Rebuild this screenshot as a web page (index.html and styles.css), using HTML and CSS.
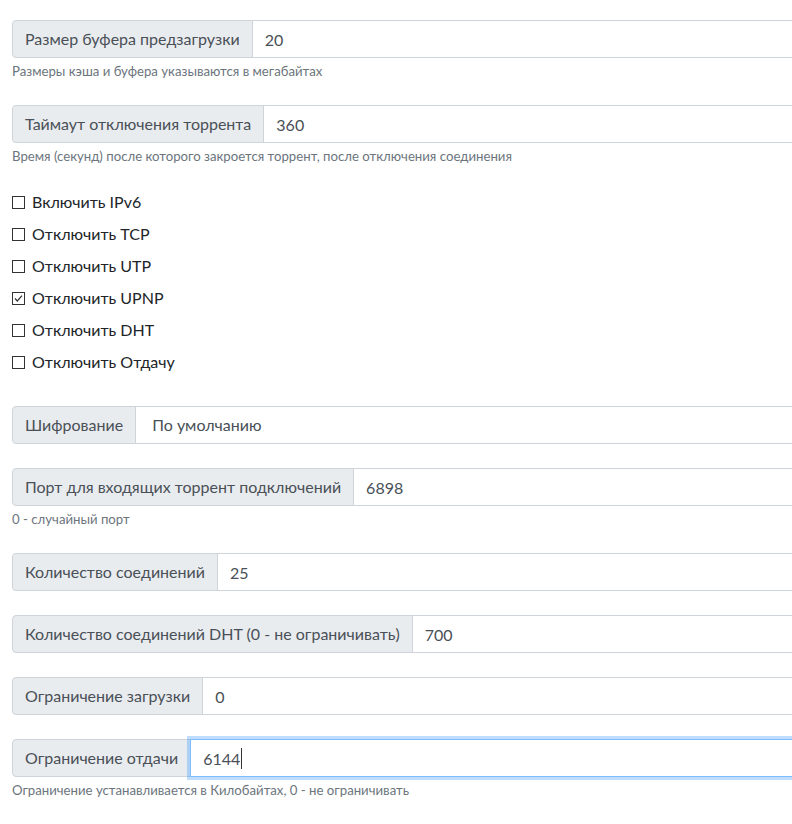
FILE: index.html
```html
<!DOCTYPE html>
<html lang="ru">
<head>
    <meta charset="UTF-8">
    <meta name="viewport" content="width=device-width, initial-scale=1.0">
    <title>Настройки</title>
    <link rel="stylesheet" href="styles.css">
</head>
<body>
    <form class="settings">
        <div class="form-group">
            <div class="input-group">
                <span class="input-label">Размер буфера предзагрузки</span>
                <input type="text" class="form-control" value="20">
            </div>
            <small class="form-text">Размеры кэша и буфера указываются в мегабайтах</small>
        </div>

        <div class="form-group">
            <div class="input-group">
                <span class="input-label">Таймаут отключения торрента</span>
                <input type="text" class="form-control" value="360">
            </div>
            <small class="form-text">Время (секунд) после которого закроется торрент, после отключения соединения</small>
        </div>

        <div class="checks">
            <label class="form-check"><input type="checkbox"><span class="box"></span>Включить IPv6</label>
            <label class="form-check"><input type="checkbox"><span class="box"></span>Отключить TCP</label>
            <label class="form-check"><input type="checkbox"><span class="box"></span>Отключить UTP</label>
            <label class="form-check"><input type="checkbox" checked><span class="box"><svg viewBox="0 0 11 11" width="11" height="11"><path d="M2 5.5 L4.3 8 L9 2.6" fill="none" stroke="#333" stroke-width="1.2"/></svg></span>Отключить UPNP</label>
            <label class="form-check"><input type="checkbox"><span class="box"></span>Отключить DHT</label>
            <label class="form-check"><input type="checkbox"><span class="box"></span>Отключить Отдачу</label>
        </div>

        <div class="form-group">
            <div class="input-group">
                <span class="input-label">Шифрование</span>
                <select class="form-control select">
                    <option selected>По умолчанию</option>
                    <option>Включено</option>
                    <option>Отключено</option>
                </select>
            </div>
        </div>

        <div class="form-group">
            <div class="input-group">
                <span class="input-label">Порт для входящих торрент подключений</span>
                <input type="text" class="form-control" value="6898">
            </div>
            <small class="form-text">0 - случайный порт</small>
        </div>

        <div class="form-group">
            <div class="input-group">
                <span class="input-label">Количество соединений</span>
                <input type="text" class="form-control" value="25">
            </div>
        </div>

        <div class="form-group">
            <div class="input-group">
                <span class="input-label">Количество соединений DHT (0 - не ограничивать)</span>
                <input type="text" class="form-control" value="700">
            </div>
        </div>

        <div class="form-group">
            <div class="input-group">
                <span class="input-label">Ограничение загрузки</span>
                <input type="text" class="form-control" value="0">
            </div>
        </div>

        <div class="form-group">
            <div class="input-group">
                <span class="input-label">Ограничение отдачи</span>
                <div class="field focused">
                    <input type="text" class="form-control" value="6144">
                    <span class="caret"></span>
                </div>
            </div>
            <small class="form-text">Ограничение устанавливается в Килобайтах, 0 - не ограничивать</small>
        </div>
    </form>
</body>
</html>
```
FILE: styles.css
```css
html, body {
    overflow: hidden;
}

body {
    font-family: 'Lato', sans-serif;
    font-size: 16px;
    line-height: 1.5;
    color: #212529;
    background: #fff;
    margin: 0;
}

.settings {
    padding: 20px 0 0 12px;
}

.form-group {
    margin-bottom: 24px;
}

.input-group {
    display: flex;
    align-items: stretch;
}

.input-label {
    display: flex;
    align-items: center;
    padding: 6px 12px;
    height: 38px;
    box-sizing: border-box;
    white-space: nowrap;
    color: #495057;
    background: #e9ecef;
    border: 1px solid #ced4da;
    border-radius: 4px 0 0 4px;
}

/* the field runs on past the right edge of the window */
.form-control {
    flex: 1;
    min-width: 0;
    height: 38px;
    box-sizing: border-box;
    margin: 0 0 0 -1px;
    padding: 6px 12px;
    font: inherit;
    color: #495057;
    background: #fff;
    border: 1px solid #ced4da;
    border-right: 0;
    border-radius: 0;
    outline: none;
}

.select {
    appearance: none;
    padding-left: 16px;
}

.form-text {
    display: block;
    margin-top: 4px;
    font-size: 13.2px;
    line-height: 19px;
    color: #6c757d;
}

.checks {
    margin-bottom: 32px;
}

.form-check {
    display: flex;
    align-items: center;
    height: 24px;
    margin-bottom: 8px;
}

.form-check input {
    display: none;
}

.form-check .box {
    width: 13px;
    height: 13px;
    box-sizing: border-box;
    margin-right: 7px;
    border: 1px solid #333;
    background: #fff;
    display: flex;
    align-items: center;
    justify-content: center;
}

.form-check .box svg {
    display: none;
}

.form-check input:checked + .box svg {
    display: block;
}

.field {
    flex: 1;
    display: flex;
    position: relative;
    z-index: 2;
}

.field.focused .form-control {
    border-color: #80bdff;
    box-shadow: 0 0 0 3px rgba(0, 123, 255, 0.25);
}

.caret {
    position: absolute;
    left: 50px;
    top: 9px;
    width: 1px;
    height: 21px;
    background: #333;
}
```
